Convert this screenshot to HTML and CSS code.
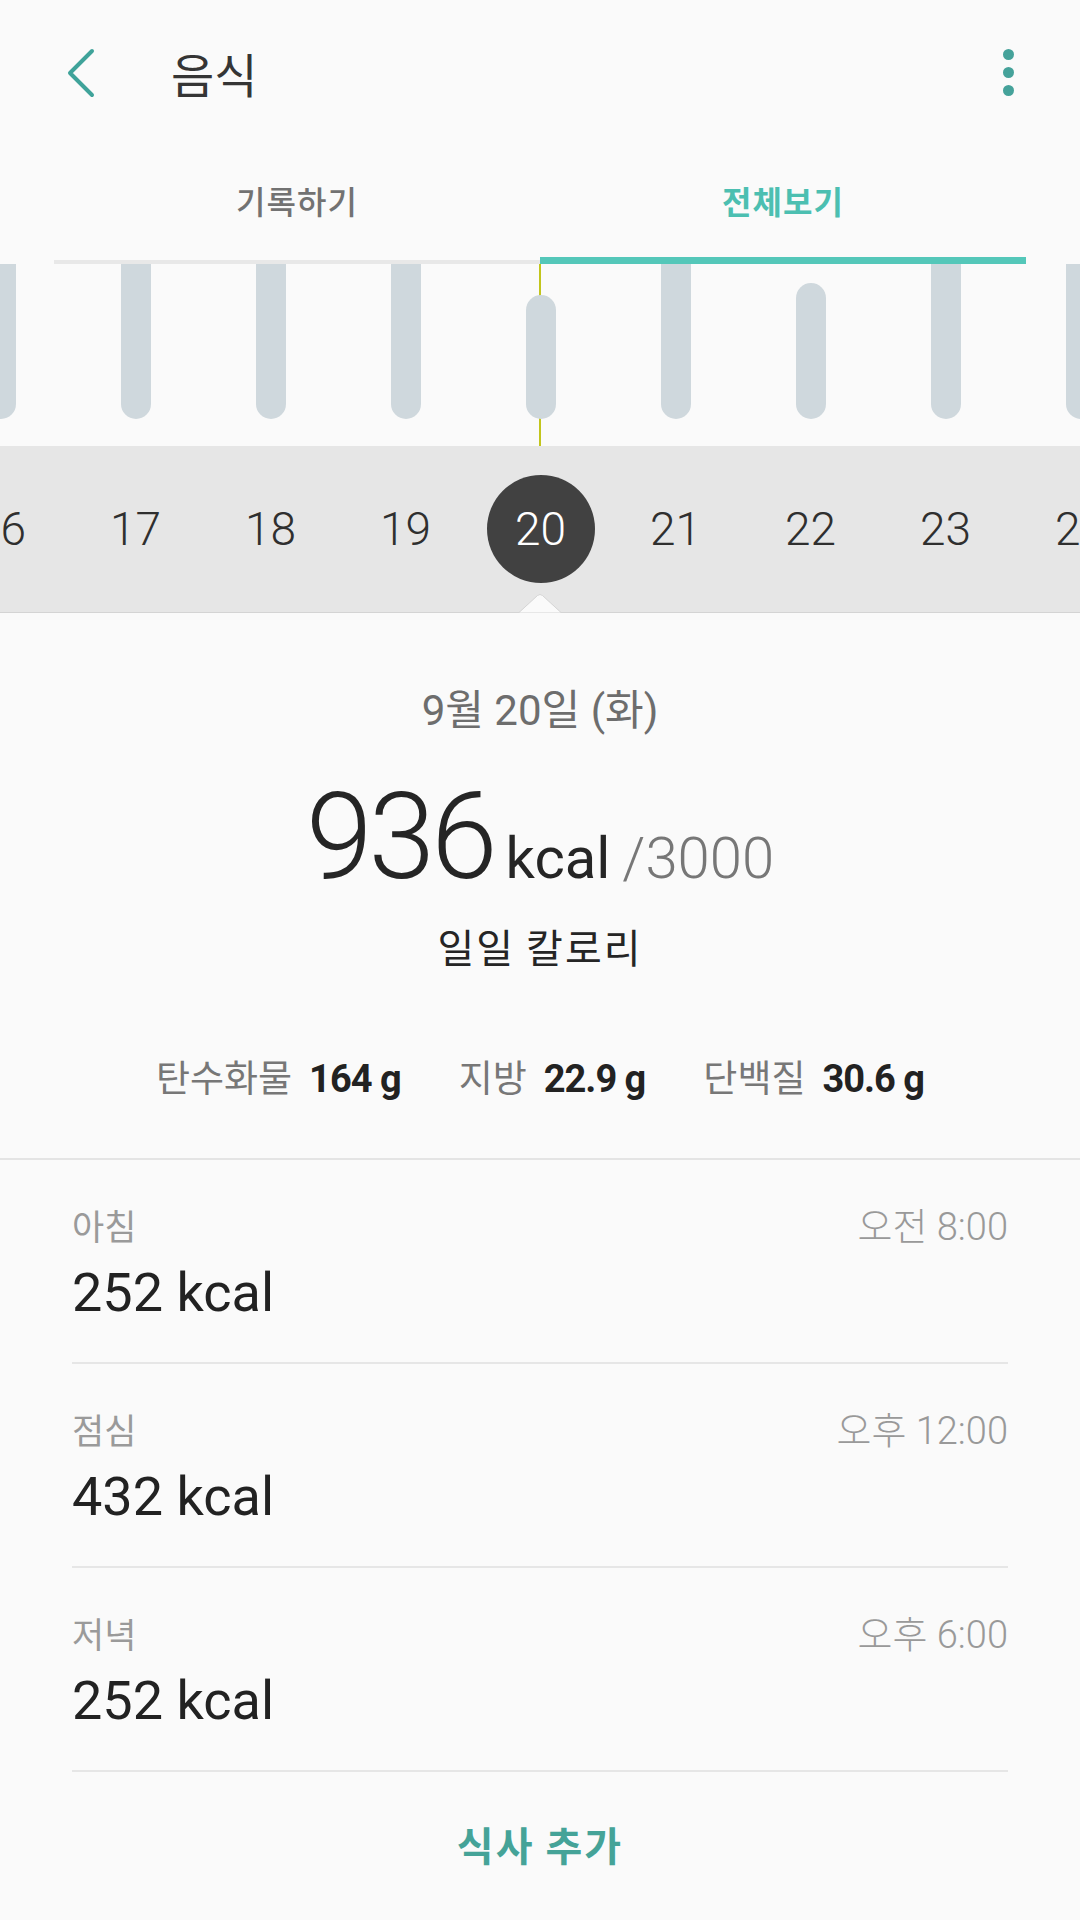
FILE: index.html
```html
<!DOCTYPE html>
<html>
<head>
    <meta charset="utf-8">
    <title>음식</title>
    <link rel="stylesheet" href="styles.css">
</head>
<body>
    <div class="app-bar">
        <div class="back">
            <svg width="30" height="50" viewBox="0 0 30 50">
                <path d="M26 3 L4 25 L26 47" fill="none" stroke="#3fa39a" stroke-width="4" stroke-linecap="round" stroke-linejoin="round"/>
            </svg>
        </div>
        <div class="title">음식</div>
        <div class="more">
            <span class="dot"></span>
            <span class="dot"></span>
            <span class="dot"></span>
        </div>
    </div>

    <div class="tabs">
        <div class="tab">기록하기</div>
        <div class="tab active">전체보기</div>
    </div>

    <div class="chart">
        <div class="marker"></div>
        <div class="cols">
            <div class="col"><div class="bar full"></div></div>
            <div class="col"><div class="bar full"></div></div>
            <div class="col"><div class="bar full"></div></div>
            <div class="col"><div class="bar full"></div></div>
            <div class="col"><div class="bar" style="height: 124px"></div></div>
            <div class="col"><div class="bar full"></div></div>
            <div class="col"><div class="bar" style="height: 136px"></div></div>
            <div class="col"><div class="bar full"></div></div>
            <div class="col"><div class="bar full"></div></div>
        </div>
    </div>

    <div class="dates">
        <div class="cols">
            <div class="col"><span class="day">16</span></div>
            <div class="col"><span class="day">17</span></div>
            <div class="col"><span class="day">18</span></div>
            <div class="col"><span class="day">19</span></div>
            <div class="col"><span class="day selected">20</span></div>
            <div class="col"><span class="day">21</span></div>
            <div class="col"><span class="day">22</span></div>
            <div class="col"><span class="day">23</span></div>
            <div class="col"><span class="day">24</span></div>
        </div>
        <svg class="notch" width="42" height="19" viewBox="0 0 42 19">
            <path d="M0 18.5 L18.5 1.5 Q21 -0.5 23.5 1.5 L42 18.5 Z" fill="#fafafa"/>
            <path d="M0 18.5 L18.5 1.5 Q21 -0.5 23.5 1.5 L42 18.5" fill="none" stroke="#d4d4d4" stroke-width="1"/>
        </svg>
    </div>

    <div class="summary">
        <div class="date">9월 20일 (화)</div>
        <div class="total">
            <span class="total-value">936</span>
            <span class="total-unit">kcal</span>
            <span class="total-goal">/3000</span>
        </div>
        <div class="total-label">일일 칼로리</div>
        <div class="macros">
            <span class="macro"><span class="macro-name">탄수화물</span><span class="macro-value">164 g</span></span>
            <span class="macro"><span class="macro-name">지방</span><span class="macro-value">22.9 g</span></span>
            <span class="macro"><span class="macro-name">단백질</span><span class="macro-value">30.6 g</span></span>
        </div>
    </div>

    <div class="meals">
        <div class="meal">
            <div class="meal-head">
                <span class="meal-name">아침</span>
                <span class="meal-time">오전 8:00</span>
            </div>
            <div class="meal-kcal">252 kcal</div>
        </div>
        <div class="meal">
            <div class="meal-head">
                <span class="meal-name">점심</span>
                <span class="meal-time">오후 12:00</span>
            </div>
            <div class="meal-kcal">432 kcal</div>
        </div>
        <div class="meal">
            <div class="meal-head">
                <span class="meal-name">저녁</span>
                <span class="meal-time">오후 6:00</span>
            </div>
            <div class="meal-kcal">252 kcal</div>
        </div>
    </div>

    <div class="add-meal">식사 추가</div>
</body>
</html>
```

FILE: styles.css
```css
body {
    margin: 0;
    width: 1080px;
    height: 1920px;
    overflow: hidden;
    background-color: #fafafa;
    color: #252525;
    font-family: Roboto, "Noto Sans CJK KR", sans-serif;
}
.app-bar {
    height: 145px;
    display: flex;
    align-items: center;
    padding: 0 66px 0 66px;
}
.back {
    width: 30px;
    height: 50px;
}
.back svg {
    display: block;
}
.title {
    margin-left: 75px;
    font-family: "Noto Sans CJK KR", sans-serif;
    font-size: 47px;
    color: #353535;
    flex: 1;
}
.more {
    display: flex;
    flex-direction: column;
    gap: 7px;
}
.dot {
    width: 11px;
    height: 11px;
    border-radius: 50%;
    background-color: #45a29a;
}
.tabs {
    display: flex;
    margin: 0 54px;
}
.tab {
    flex: 1;
    height: 119px;
    box-sizing: border-box;
    padding-bottom: 6px;
    display: flex;
    align-items: center;
    justify-content: center;
    border-bottom: 4px solid #e8e8e8;
    font-family: "Noto Sans CJK KR", sans-serif;
    font-size: 32px;
    font-weight: 500;
    color: #727272;
    letter-spacing: 1px;
}
.tab.active {
    border-bottom: 7px solid #54c7b9;
    padding-bottom: 3px;
    color: #4cbfb1;
    font-weight: 700;
}
.chart {
    position: relative;
    height: 182px;
    box-sizing: border-box;
    padding-bottom: 27px;
    overflow: hidden;
}
.marker {
    position: absolute;
    left: 539px;
    top: 0;
    bottom: 0;
    width: 2px;
    background-color: #c2c51c;
}
.cols {
    display: flex;
    height: 100%;
    margin-left: -67px;
}
.col {
    flex: none;
    width: 135px;
    display: flex;
    justify-content: center;
    align-items: flex-end;
}
.bar {
    position: relative;
    flex: none;
    width: 30px;
    border-radius: 15px;
    background-color: #cfd8dd;
}
.bar.full {
    height: 180px;
}
.dates {
    position: relative;
    height: 167px;
    box-sizing: border-box;
    background-color: #e6e6e6;
    border-bottom: 1px solid #d4d4d4;
}
.dates .col {
    align-items: center;
}
.day {
    width: 108px;
    height: 108px;
    border-radius: 50%;
    display: flex;
    align-items: center;
    justify-content: center;
    font-size: 46px;
    font-weight: 300;
    color: #2f2f2f;
}
.day.selected {
    background-color: #414141;
    color: #fff;
}
.notch {
    position: absolute;
    left: 519px;
    bottom: -1px;
    display: block;
}
.summary {
    text-align: center;
    padding-top: 73px;
    padding-bottom: 46px;
    border-bottom: 2px solid #e4e4e4;
}
.date {
    font-size: 42px;
    line-height: 50px;
    color: #6d6d6d;
}
.total {
    margin-top: 41px;
    line-height: 120px;
    height: 120px;
}
.total-value {
    font-size: 120px;
    font-weight: 300;
    letter-spacing: -4px;
    color: #252525;
}
.total-unit {
    font-size: 58px;
    margin-left: 8px;
    color: #252525;
}
.total-goal {
    font-size: 58px;
    font-weight: 300;
    margin-left: 8px;
    color: #777;
}
.total-label {
    margin-top: 24px;
    font-family: "Noto Sans CJK KR", sans-serif;
    font-size: 40px;
    line-height: 50px;
    font-weight: 400;
    color: #252525;
    letter-spacing: 2px;
}
.macros {
    margin-top: 83px;
    line-height: 50px;
    display: flex;
    justify-content: center;
    gap: 58px;
}
.macro-name {
    font-size: 37px;
    color: #777;
    margin-right: 17px;
}
.macro-value {
    font-size: 38px;
    font-weight: 700;
    color: #222;
    letter-spacing: -1px;
}
.meals {
    margin: 0 72px;
}
.meal {
    height: 204px;
    box-sizing: border-box;
    padding-top: 45px;
    border-bottom: 2px solid #e6e6e6;
}
.meal-head {
    display: flex;
    justify-content: space-between;
    align-items: baseline;
    line-height: 44px;
}
.meal-name {
    font-size: 35px;
    color: #9a9a9a;
}
.meal-time {
    font-size: 38px;
    font-weight: 300;
    color: #999;
}
.meal-kcal {
    margin-top: 10px;
    font-size: 54px;
    line-height: 64px;
    color: #222;
}
.add-meal {
    margin-top: 42px;
    text-align: center;
    font-family: "Noto Sans CJK KR", sans-serif;
    font-size: 40px;
    line-height: 60px;
    font-weight: 700;
    color: #45a398;
    letter-spacing: 2px;
}
```
